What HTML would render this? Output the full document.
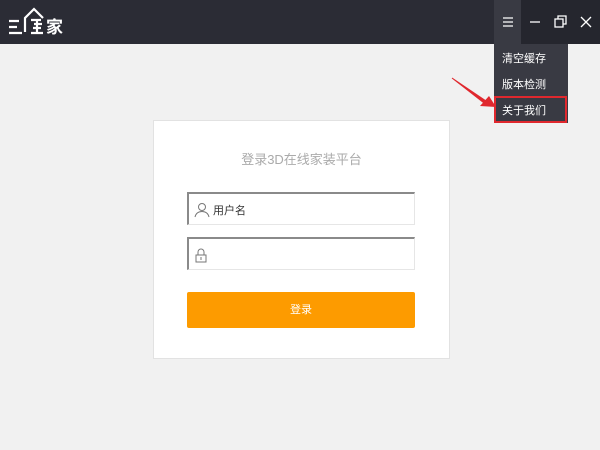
<!DOCTYPE html>
<html><head><meta charset="utf-8"><style>
*{margin:0;padding:0;box-sizing:border-box}
body{width:600px;height:450px;background:#f1f1f1;font-family:"Liberation Sans","Noto Sans CJK SC",sans-serif;position:relative;overflow:hidden}
.hdr{position:absolute;left:0;top:0;width:600px;height:44px;background:#2b2c35}
.ctl{position:absolute;left:521px;top:0;width:79px;height:44px;background:#25262e}
.mbtn{position:absolute;left:494px;top:0;width:27px;height:44px;background:#393a43}
.menu{position:absolute;left:494px;top:44px;width:74px;height:79px;background:#393a43;padding-top:2px}
.menu div{height:26px;line-height:26px;padding-left:8px;color:#fff;font-size:11px}
.redbox{position:absolute;left:494px;top:96px;width:73px;height:27px;border:2px solid #e0282e}
.card{position:absolute;left:153px;top:120px;width:297px;height:239px;background:#fff;border:1px solid #e2e2e2}
.title{position:absolute;left:0;width:100%;top:28px;text-align:center;color:#aaa;font-size:13px}
.inp{position:absolute;left:33px;width:228px;height:33px;border:1px solid #e6e6e6;border-top:2px solid #8a8a8a;border-left:2px solid #8a8a8a;background:#fff}
.btn{position:absolute;left:33px;top:171px;width:228px;height:36px;background:#fd9b00;border-radius:2px;color:#fff;font-size:11px;text-align:center;line-height:36px}
</style></head><body>
<div class="hdr"></div>
<div class="ctl"></div>
<div class="mbtn"></div>
<svg style="position:absolute;left:0;top:0" width="600" height="44">
<g fill="none" stroke="#fff" stroke-width="2.2">
<path d="M9 21h10M9 27h8M9 33h13M25 32V18l9-9 9 9"/>
<path d="M31 20h10M34 24h8M33 28h8M31 33h12M37 20v13"/>
</g>
<text x="46" y="33" fill="#fff" font-size="17" font-weight="bold" font-family="Noto Sans CJK SC,sans-serif">家</text>
<g stroke="#fff" stroke-width="1.3" fill="none">
<path d="M503 18h10M503 22h10M503 26h10"/>
<path d="M530 22h10"/>
<rect x="555" y="19" width="8" height="8"/><path d="M558 19v-3h8v8h-3"/>
<path d="M581 17l10 10M591 17l-10 10"/>
</g>
</svg>
<div class="menu"><div>清空缓存</div><div>版本检测</div><div>关于我们</div></div>
<div class="redbox"></div>
<svg style="position:absolute;left:440px;top:70px" width="60" height="45">
<path d="M12 8L46 31L44 33Z" fill="#e0282e" stroke="#e0282e" stroke-width="1"/>
<path d="M56 37L40 36L49 26Z" fill="#e0282e"/>
</svg>
<div class="card">
<div class="title">登录3D在线家装平台</div>
<div class="inp" style="top:71px">
<svg style="position:absolute;left:5px;top:8px" width="16" height="16" fill="none" stroke="#777" stroke-width="1"><circle cx="8" cy="5" r="3.5"/><path d="M1 15c1-4 4-5.5 7-5.5s6 1.5 7 5.5"/></svg>
<span style="position:absolute;left:24px;top:8px;font-size:11px;color:#333">用户名</span></div>
<div class="inp" style="top:116px">
<svg style="position:absolute;left:5px;top:8px" width="14" height="16" fill="none" stroke="#777" stroke-width="1"><path d="M4 8V5a3 3 0 0 1 6 0v3"/><rect x="2" y="8" width="10" height="7"/><path d="M7 10v3"/></svg></div>
<div class="btn">登录</div>
</div>
</body></html>
